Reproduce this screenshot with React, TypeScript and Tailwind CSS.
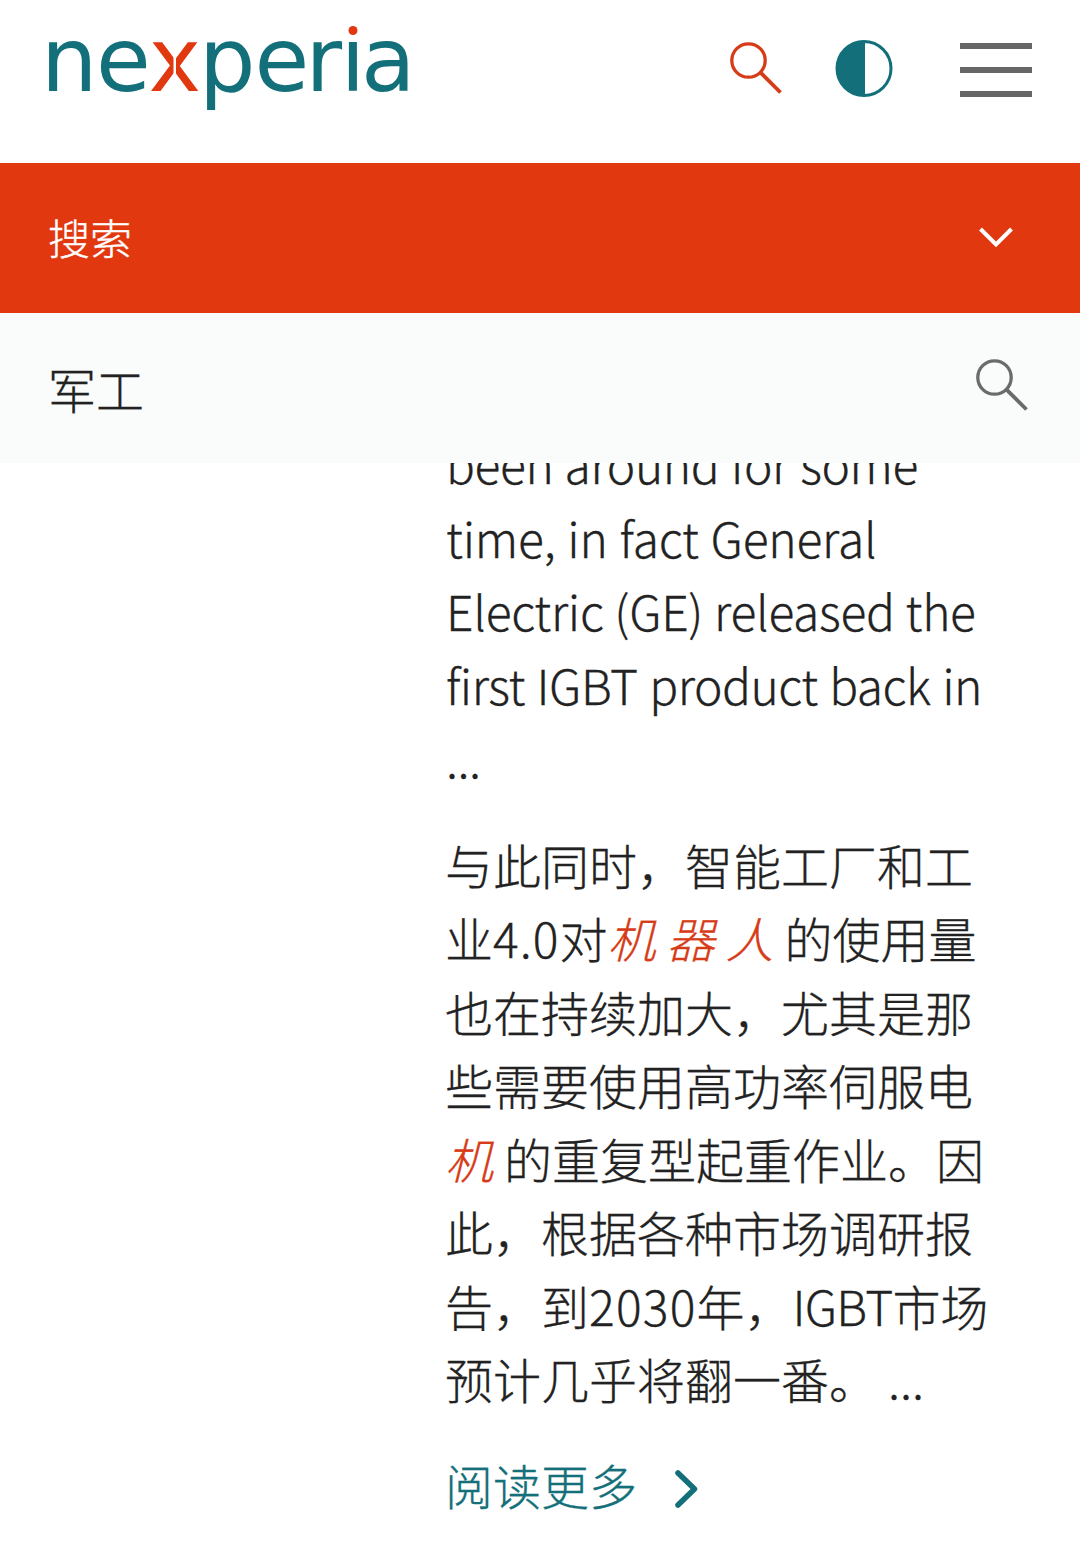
const latinLines = [
  { text: "been around for some", spacing: "tracking-[-0.4px] [word-spacing:1px]" },
  { text: "time, in fact General", spacing: "tracking-[-0.2px] [word-spacing:1.5px]" },
  { text: "Electric (GE) released the", spacing: "tracking-[-0.3px] [word-spacing:0.5px]" },
  { text: "first IGBT product back in", spacing: "tracking-[-0.5px] [word-spacing:1.5px]" },
  { text: "...", spacing: "tracking-[-0.5px]" },
];

function Logo() {
  return (
    <svg
      width="378"
      height="110"
      viewBox="-8 0 378 110"
      className="-ml-2 shrink-0 font-['DejaVu_Sans',sans-serif] text-[89px] font-normal"
      role="img"
      aria-label="nexperia"
    >
      <text y="67.5" fill="#13707a">
        <tspan x="-7">n</tspan>
        <tspan x="48">e</tspan>
        <tspan x="100.5" fill="#e1380f">x</tspan>
        <tspan x="151">p</tspan>
        <tspan x="206.5">e</tspan>
        <tspan x="257.5">r</tspan>
        <tspan x="292.5">i</tspan>
        <tspan x="313">a</tspan>
      </text>
      {/* gap that splits the x into two chevrons */}
      <rect x="125.5" y="16" width="2.5" height="54" fill="#fff" />
      {/* the i gets a red round dot */}
      <rect x="298" y="-2" width="14" height="18" fill="#fff" />
      <circle cx="305" cy="7.5" r="4.5" fill="#e1380f" />
    </svg>
  );
}

function SearchIcon({ color }: { color: string }) {
  return (
    <svg width="52" height="52" viewBox="0 0 52 52" fill="none" stroke={color}>
      <circle cx="18.5" cy="18.5" r="16.7" strokeWidth="3.3" />
      <path d="M30.3 30.3L50.5 50.5" strokeWidth="3.8" />
    </svg>
  );
}

function ContrastIcon() {
  return (
    <svg width="58" height="58" viewBox="0 0 58 58">
      <circle cx="29" cy="28.5" r="27" fill="none" stroke="#13707a" strokeWidth="3" />
      <path d="M30 0.5A28 28 0 0 0 30 56.5Z" fill="#13707a" />
    </svg>
  );
}

function MenuIcon() {
  return (
    <div className="flex w-[72px] flex-col gap-[18px]">
      <span className="h-1.5 bg-[#666666]" />
      <span className="h-1.5 bg-[#666666]" />
      <span className="h-1.5 bg-[#666666]" />
    </div>
  );
}

function Highlight({ children }: { children: React.ReactNode }) {
  return <em className="text-[#d63c17] italic">{children}</em>;
}

export default function App() {
  return (
    <div
      lang="zh-CN"
      className="flex h-[1545px] w-[1080px] flex-col overflow-hidden bg-white font-['Noto_Sans_CJK_SC',sans-serif] font-light text-[#222222]"
    >
      <header className="flex h-[163px] shrink-0 items-start pl-12 pr-12">
        <div className="pt-[23px]">
          <Logo />
        </div>
        <div className="ml-auto flex items-start">
          <button className="mt-[42px]">
            <SearchIcon color="#d63c17" />
          </button>
          <button className="ml-[53px] mt-10">
            <ContrastIcon />
          </button>
          <button className="ml-[67px] mt-[43px]">
            <MenuIcon />
          </button>
        </div>
      </header>

      <nav className="flex h-[150px] shrink-0 items-center justify-between bg-[#e1380f] pb-[3px] pl-12 pr-[65px] text-white">
        <span className="text-[42px] leading-[60px] [-webkit-text-stroke:0.4px]">搜索</span>
        <svg width="38" height="24" viewBox="0 0 38 24" fill="none" stroke="#fff" strokeWidth="4">
          <path d="M3.5 4L19 19.5L34.5 4" />
        </svg>
      </nav>

      <div className="flex h-[150px] shrink-0 items-center justify-between bg-[#fafcfb] pl-12 pr-[52px]">
        <span className="text-[48px] leading-[70px] [-webkit-text-stroke:0.3px]">军工</span>
        <div className="pb-1.5">
          <SearchIcon color="#6b6b6b" />
        </div>
      </div>

      <main className="flex-1 overflow-hidden pl-[446px]">
        <div className="-mt-9 whitespace-nowrap text-[48px] leading-[73.5px] [-webkit-text-stroke:0.3px]">
          <p>
            {latinLines.map((line) => (
              <span key={line.text} className={`block ${line.spacing}`}>
                {line.text}
              </span>
            ))}
          </p>
          <p className="-ml-px mt-[33px] [word-spacing:0.4px]">
            与此同时，智能工厂和工
            <br />
            业<span className="tracking-[1px]">4.0</span>对<Highlight>机 器 人</Highlight> 的使用量
            <br />
            也在持续加大，尤其是那
            <br />
            些需要使用高功率伺服电
            <br />
            <Highlight>机</Highlight> 的重复型起重作业。因
            <br />
            此，根据各种市场调研报
            <br />
            告，到<span className="tracking-[1.2px]">2030</span>年，
            <span className="tracking-[-0.8px]">IGBT</span>市场
            <br />
            预计几乎将翻一番。 ...
          </p>
          <a className="-ml-px mt-8 flex items-center text-[#13707a]">
            阅读更多
            <svg
              width="26"
              height="42"
              viewBox="0 0 26 42"
              className="ml-[37px] mt-2.5"
              fill="none"
              stroke="#13707a"
              strokeWidth="5.5"
              strokeLinecap="round"
              strokeLinejoin="round"
            >
              <path d="M4 5L20.5 21L4 37" />
            </svg>
          </a>
        </div>
      </main>
    </div>
  );
}
